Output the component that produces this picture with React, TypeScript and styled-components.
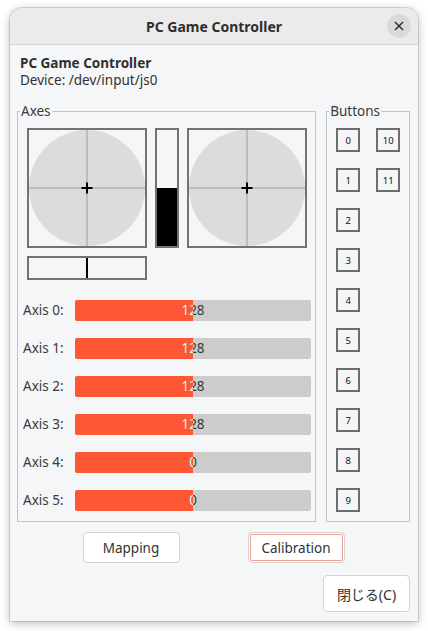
import styled, { createGlobalStyle } from 'styled-components'

const GlobalStyle = createGlobalStyle`
  html, body {
    margin: 0;
    padding: 0;
    background: #ffffff;
  }
  body {
    font-family: "Noto Sans", "Noto Sans CJK JP", "DejaVu Sans", sans-serif;
    color: #333333;
  }
`

const Page = styled.div`
  width: 428px;
  height: 631px;
  padding: 8px 10px 0 10px;
  box-sizing: border-box;
`

const Window = styled.div`
  width: 408px;
  height: 613px;
  display: flex;
  flex-direction: column;
  background: #f5f6f7;
  border-radius: 12px 12px 0 0;
  box-shadow: 0 2px 10px rgba(0, 0, 0, 0.28), 0 0 0 1px rgba(0, 0, 0, 0.12);
  overflow: hidden;
`

const HeaderBar = styled.div`
  height: 36px;
  flex-shrink: 0;
  display: flex;
  align-items: center;
  justify-content: center;
  position: relative;
  background: #ebebeb;
  border-bottom: 1px solid #d4d4d4;
`

const HeaderTitle = styled.span`
  font-size: 14px;
  font-weight: 700;
  color: #2e2e2e;
`

const CloseButton = styled.button`
  position: absolute;
  right: 7px;
  top: 6px;
  width: 24px;
  height: 24px;
  border-radius: 50%;
  border: none;
  background: #dadada;
  display: flex;
  align-items: center;
  justify-content: center;
  padding: 0;
`

const Content = styled.div`
  flex: 1;
  display: flex;
  flex-direction: column;
  padding: 10px 8px 9px 7px;
`

const Heading = styled.div<{ $bold?: boolean }>`
  margin-left: 3px;
  font-size: 13.5px;
  line-height: 17px;
  font-weight: ${p => (p.$bold ? 700 : 400)};
  color: #303030;
`

const Frames = styled.div`
  display: flex;
  gap: 10px;
  margin-top: 14px;
`

const Frame = styled.fieldset<{ $width: number }>`
  width: ${p => p.$width}px;
  box-sizing: border-box;
  margin: 0;
  padding: 0 0 2px 0;
  border: 1px solid #c4c4c4;
  min-width: 0;
`

const FrameLabel = styled.legend`
  margin-left: 2px;
  padding: 0 1px;
  font-size: 13.5px;
  line-height: 17px;
  color: #3a3a3a;
`

const StickRow = styled.div`
  display: flex;
  gap: 8px;
  padding: 8px 0 0 9px;
`

const StickBox = styled.div`
  width: 120px;
  height: 120px;
  box-sizing: border-box;
  border: 2px solid #737373;
`

const VBar = styled.div`
  width: 24px;
  height: 120px;
  box-sizing: border-box;
  border: 2px solid #737373;
  display: flex;
  flex-direction: column;
  justify-content: flex-end;
`

const VBarFill = styled.div`
  background: #000000;
`

const HSlider = styled.div`
  margin: 8px 0 0 9px;
  width: 120px;
  height: 24px;
  box-sizing: border-box;
  border: 2px solid #737373;
  display: flex;
  justify-content: center;
`

const HSliderMark = styled.div`
  width: 2px;
  background: #000000;
`

const AxisList = styled.div`
  display: flex;
  flex-direction: column;
  padding: 11px 0 0 5px;
`

const AxisRow = styled.div`
  height: 38px;
  display: flex;
  align-items: center;
`

const AxisLabel = styled.span`
  width: 52px;
  font-size: 13.5px;
  color: #3a3a3a;
`

const Bar = styled.div`
  position: relative;
  width: 236px;
  height: 21px;
  border-radius: 2px;
  background: #cccccc;
`

const BarFill = styled.div`
  position: absolute;
  left: 0;
  top: 0;
  bottom: 0;
  border-radius: 2px 0 0 2px;
  background: #fd5733;
`

const BarText = styled.div<{ $light?: boolean }>`
  position: absolute;
  inset: 0;
  line-height: 21px;
  text-align: center;
  font-size: 13.5px;
  color: ${p => (p.$light ? '#ffffff' : '#3a3a3a')};
`

const ButtonGrid = styled.div`
  display: grid;
  grid-template-rows: repeat(10, 24px);
  grid-template-columns: 24px 24px;
  grid-auto-flow: column;
  column-gap: 16px;
  row-gap: 16px;
  padding: 8px 0 0 9px;
`

const PadButton = styled.div`
  box-sizing: border-box;
  border: 2px solid #6e6e6e;
  display: flex;
  align-items: center;
  justify-content: center;
  font-size: 9.5px;
  color: #111111;
`

const ActionRow = styled.div`
  display: flex;
  justify-content: center;
  gap: 68px;
  margin-top: 10px;
`

const PushButton = styled.button<{ $focused?: boolean }>`
  width: 97px;
  height: 31px;
  box-sizing: border-box;
  background: #ffffff;
  border: 1px solid #d3d3d3;
  border-radius: 4px;
  font-family: inherit;
  font-size: 13.5px;
  color: #333333;
  padding: 0;
  box-shadow: ${p => (p.$focused ? 'inset 0 0 0 1px #ffffff, inset 0 0 0 2px #eba592' : 'none')};
`

const Footer = styled.div`
  display: flex;
  justify-content: flex-end;
  margin-top: auto;
`

const CloseDialogButton = styled(PushButton)`
  width: 87px;
  height: 37px;
  font-size: 14px;
`

function Stick() {
  return (
    <StickBox>
      <svg width="116" height="116" viewBox="0 0 116 116">
        <circle cx="58" cy="58" r="58" fill="#dcdcdf" />
        <line x1="58" y1="0" x2="58" y2="116" stroke="#bcbcbc" strokeWidth="2" />
        <line x1="0" y1="58" x2="116" y2="58" stroke="#bcbcbc" strokeWidth="2" />
        <line x1="52.5" y1="58" x2="63.5" y2="58" stroke="#000" strokeWidth="2" />
        <line x1="58" y1="52.5" x2="58" y2="63.5" stroke="#000" strokeWidth="2" />
      </svg>
    </StickBox>
  )
}

const axes = [128, 128, 128, 128, 0, 0]
const fill = 50

export default function App() {
  return (
    <>
      <GlobalStyle />
      <Page>
        <Window>
          <HeaderBar>
            <HeaderTitle>PC Game Controller</HeaderTitle>
            <CloseButton aria-label="close">
              <svg width="10" height="10" viewBox="0 0 10 10">
                <path d="M1 1 L9 9 M9 1 L1 9" stroke="#2e2e2e" strokeWidth="1.5" />
              </svg>
            </CloseButton>
          </HeaderBar>
          <Content>
            <Heading $bold>PC Game Controller</Heading>
            <Heading>Device: /dev/input/js0</Heading>
            <Frames>
              <Frame $width={300}>
                <FrameLabel>Axes</FrameLabel>
                <StickRow>
                  <Stick />
                  <VBar>
                    <VBarFill style={{ height: '50%' }} />
                  </VBar>
                  <Stick />
                </StickRow>
                <HSlider>
                  <HSliderMark />
                </HSlider>
                <AxisList>
                  {axes.map((v, i) => (
                    <AxisRow key={i}>
                      <AxisLabel>Axis {i}:</AxisLabel>
                      <Bar>
                        <BarFill style={{ width: `${fill}%` }} />
                        <BarText>{v}</BarText>
                        <BarText $light style={{ clipPath: `inset(0 ${100 - fill}% 0 0)` }}>{v}</BarText>
                      </Bar>
                    </AxisRow>
                  ))}
                </AxisList>
              </Frame>
              <Frame $width={84}>
                <FrameLabel>Buttons</FrameLabel>
                <ButtonGrid>
                  {Array.from({ length: 12 }, (_, i) => (
                    <PadButton key={i}>{i}</PadButton>
                  ))}
                </ButtonGrid>
              </Frame>
            </Frames>
            <ActionRow>
              <PushButton>Mapping</PushButton>
              <PushButton $focused>Calibration</PushButton>
            </ActionRow>
            <Footer>
              <CloseDialogButton>閉じる(C)</CloseDialogButton>
            </Footer>
          </Content>
        </Window>
      </Page>
    </>
  )
}
